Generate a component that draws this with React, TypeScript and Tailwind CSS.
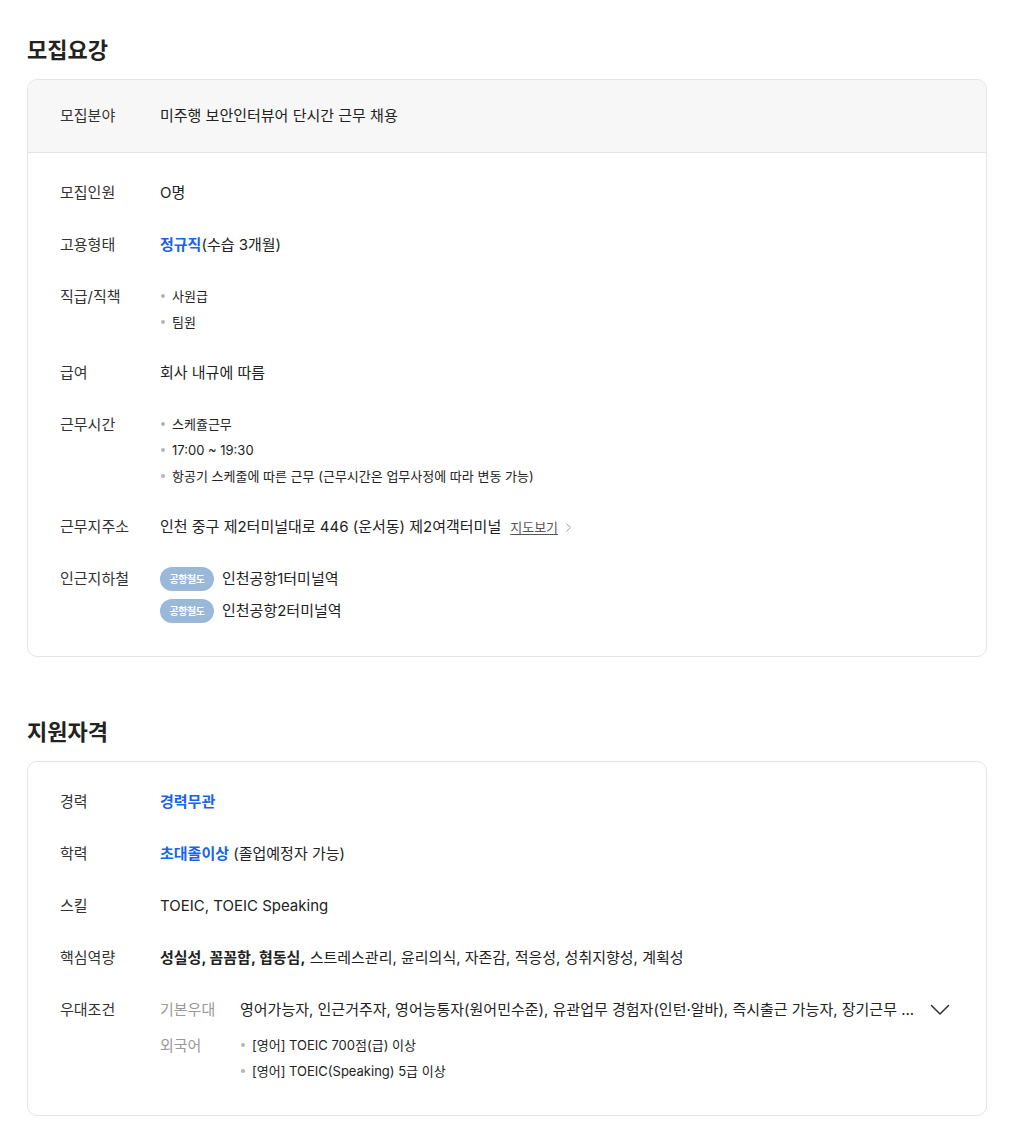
import { ChevronRight } from 'lucide-react';

const font = 'font-["Inter","Noto_Sans_CJK_KR",sans-serif]';

function Row({ label, children }: { label: string; children: React.ReactNode }) {
  return (
    <div className="flex">
      <div className="w-[100px] shrink-0 text-[15px] leading-[24px] text-[#333]">{label}</div>
      <div className="min-w-0 flex-1 text-[15px] leading-[24px] text-[#222]">{children}</div>
    </div>
  );
}

function Bullets({ items }: { items: string[] }) {
  return (
    <ul className="space-y-[4px]">
      {items.map((item) => (
        <li key={item} className="flex items-center text-[13px] leading-[22px] text-[#222]">
          <span className="mr-[7px] ml-[1px] h-[4px] w-[4px] rounded-full bg-[#b5b5b5]" />
          {item}
        </li>
      ))}
    </ul>
  );
}

function Station({ name }: { name: string }) {
  return (
    <div className="flex h-[24px] items-center">
      <span className="flex h-[24px] w-[54px] items-center justify-center rounded-full bg-[#9ab9d9] text-[10px] font-bold tracking-[-0.5px] text-white">
        공항철도
      </span>
      <span className="ml-[8px] text-[15px] text-[#222]">{name}</span>
    </div>
  );
}

export default function App() {
  return (
    <div className={`${font} min-h-screen bg-white pt-[35px] pr-[25px] pb-[22px] pl-[27px]`}>
      {/* 모집요강 */}
      <h2 className="mb-[14px] text-[22px] leading-[30px] font-bold text-[#222]">모집요강</h2>
      <div className="overflow-hidden rounded-[10px] border border-[#e4e4e4]">
        <div className="border-b border-[#e4e4e4] bg-[#f7f7f7] py-[24px] pr-[36px] pl-[32px]">
          <Row label="모집분야">미주행 보안인터뷰어 단시간 근무 채용</Row>
        </div>
        <div className="flex flex-col gap-[28px] pt-[28px] pr-[36px] pb-[33px] pl-[32px]">
          <Row label="모집인원">O명</Row>
          <Row label="고용형태">
            <span className="font-bold text-[#1563ee]">정규직</span>(수습 3개월)
          </Row>
          <Row label="직급/직책">
            <Bullets items={['사원급', '팀원']} />
          </Row>
          <Row label="급여">회사 내규에 따름</Row>
          <Row label="근무시간">
            <Bullets items={['스케쥴근무', '17:00 ~ 19:30', '항공기 스케줄에 따른 근무 (근무시간은 업무사정에 따라 변동 가능)']} />
          </Row>
          <Row label="근무지주소">
            <span className="inline-flex items-center">
              인천 중구 제2터미널대로 446 (운서동) 제2여객터미널
              <a className="ml-[9px] text-[13px] text-[#555] underline underline-offset-2">지도보기</a>
              <ChevronRight className="ml-[3px] h-[15px] w-[15px] text-[#999]" strokeWidth={1.5} />
            </span>
          </Row>
          <Row label="인근지하철">
            <div className="flex flex-col gap-[8px]">
              <Station name="인천공항1터미널역" />
              <Station name="인천공항2터미널역" />
            </div>
          </Row>
        </div>
      </div>

      {/* 지원자격 */}
      <h2 className="mt-[60px] mb-[14px] text-[22px] leading-[30px] font-bold text-[#222]">지원자격</h2>
      <div className="flex flex-col gap-[28px] rounded-[10px] border border-[#e4e4e4] pt-[28px] pr-[36px] pb-[33px] pl-[32px]">
        <Row label="경력">
          <span className="font-bold text-[#1563ee]">경력무관</span>
        </Row>
        <Row label="학력">
          <span className="font-bold text-[#1563ee]">초대졸이상</span> (졸업예정자 가능)
        </Row>
        <Row label="스킬">TOEIC, TOEIC Speaking</Row>
        <Row label="핵심역량">
          <span className="font-bold">성실성, 꼼꼼함, 협동심,</span> 스트레스관리, 윤리의식, 자존감, 적응성, 성취지향성, 계획성
        </Row>
        <Row label="우대조건">
          <div className="flex flex-col gap-[12px]">
            <div className="flex items-center">
              <span className="w-[80px] shrink-0 text-[#999]">기본우대</span>
              <span className="min-w-0 flex-1 whitespace-nowrap">
                영어가능자, 인근거주자, 영어능통자(원어민수준), 유관업무 경험자(인턴·알바), 즉시출근 가능자, 장기근무 ...
              </span>
              <svg className="ml-[16px] shrink-0" width="20" height="12" viewBox="0 0 20 12" fill="none">
                <path d="M1.5 1.5 L10 10 L18.5 1.5" stroke="#333" strokeWidth="1.5" strokeLinecap="round" strokeLinejoin="round" />
              </svg>
            </div>
            <div className="flex">
              <span className="w-[80px] shrink-0 text-[#999]">외국어</span>
              <Bullets items={['[영어] TOEIC 700점(급) 이상', '[영어] TOEIC(Speaking) 5급 이상']} />
            </div>
          </div>
        </Row>
      </div>
    </div>
  );
}
